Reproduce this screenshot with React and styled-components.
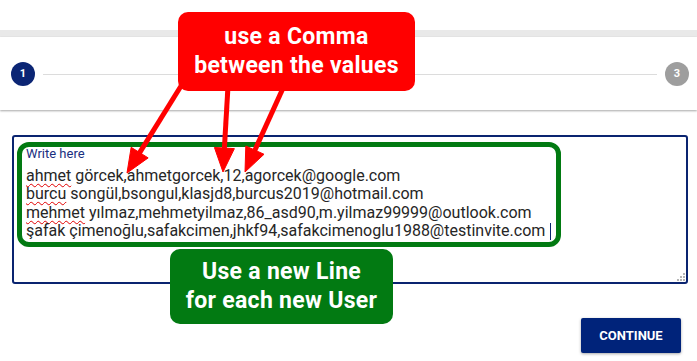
import React from 'react';
import styled, { createGlobalStyle } from 'styled-components';

const GlobalStyle = createGlobalStyle`
  body {
    margin: 0;
    background: #fff;
    font-family: Roboto, "Liberation Sans", sans-serif;
  }
`

const Page = styled.div`
  position: relative;
  width: 697px;
  height: 361px;
  overflow: hidden;
  padding-top: 30px;
  box-sizing: border-box;
`

const Strip = styled.div`
  height: 7px;
  background: #e9e9e9;
`

const Stepper = styled.div`
  display: flex;
  align-items: center;
  gap: 8px;
  height: 73px;
  padding: 0 8px 0 11px;
  background: #fff;
  box-shadow: 0 1px 2px rgba(0, 0, 0, 0.35);
`

const StepDot = styled.div`
  flex: none;
  display: flex;
  align-items: center;
  justify-content: center;
  width: 24px;
  height: 24px;
  border-radius: 50%;
  background: ${p => (p.$active ? '#0b2574' : '#9e9e9e')};
  color: #fff;
  font-size: 11px;
  font-weight: 700;
`

const StepLine = styled.div`
  flex: 1;
  height: 1px;
  margin: 1px 0 0;
  background: #dcdcdc;
`

const Field = styled.div`
  position: relative;
  height: 149px;
  margin: 25px 9px 0 12px;
  padding: 9px 12px 0;
  box-sizing: border-box;
  border: 2px solid #0a2470;
  border-radius: 3px;
`

const Label = styled.div`
  font-size: 13px;
  line-height: 15px;
  color: #1a2f80;
`

const Entries = styled.div`
  margin-top: 6px;
  font-size: 16px;
  line-height: 18.4px;
  color: #262626;
  white-space: pre;
`

const Typo = styled.span`
  text-decoration: underline wavy #e00000;
  text-decoration-thickness: 1px;
  text-underline-offset: 2px;
`

const Caret = styled.span`
  display: inline-block;
  width: 1px;
  height: 17px;
  margin-left: 5px;
  vertical-align: -4px;
  background: #0a2470;
`

const Grip = styled.svg`
  position: absolute;
  right: 1px;
  bottom: 1px;
`

const Footer = styled.div`
  display: flex;
  justify-content: flex-end;
  margin: 34px 16px 0 0;
`

const ContinueButton = styled.button`
  width: 100px;
  height: 35px;
  border: 0;
  border-radius: 2px;
  background: #00237a;
  color: #fff;
  font-family: Roboto, "Liberation Sans", sans-serif;
  font-size: 13px;
  font-weight: 700;
  box-shadow: 0 1px 3px rgba(0, 0, 0, 0.35);
`

const Highlight = styled.div`
  position: absolute;
  left: 17px;
  top: 142px;
  width: 544px;
  height: 105px;
  box-sizing: border-box;
  border: 5px solid #027a12;
  border-radius: 12px;
  pointer-events: none;
`

const Callout = styled.div`
  position: absolute;
  left: ${p => p.$left}px;
  top: ${p => p.$top}px;
  width: ${p => p.$width}px;
  height: ${p => p.$height}px;
  display: flex;
  flex-direction: column;
  align-items: center;
  justify-content: center;
  border-radius: 10px;
  background: ${p => p.$bg};
  color: #fff;
  font-size: 23px;
  font-weight: 700;
  letter-spacing: 0.3px;
  line-height: 28.5px;
  text-align: center;
`

const Arrows = styled.svg`
  position: absolute;
  left: 0;
  top: 0;
  pointer-events: none;
`

const arrows = [
  { from: [181, 86], tip: [127, 173] },
  { from: [228, 86], tip: [223, 172] },
  { from: [284, 86], tip: [245, 172] },
];

const Arrow = ({ from, tip }) => {
  const dx = tip[0] - from[0];
  const dy = tip[1] - from[1];
  const len = Math.hypot(dx, dy);
  const ux = dx / len;
  const uy = dy / len;
  const bx = tip[0] - ux * 24;
  const by = tip[1] - uy * 24;
  const w = 10;
  const pts = `${tip[0]},${tip[1]} ${bx + uy * w},${by - ux * w} ${bx - uy * w},${by + ux * w}`;
  return (
    <g fill="#ff0000" stroke="#ff0000">
      <line x1={from[0]} y1={from[1]} x2={bx + ux * 2} y2={by + uy * 2} strokeWidth="5" />
      <polygon points={pts} strokeWidth="1" strokeLinejoin="round" />
    </g>
  );
};

const App = () => {
  return (
    <Page>
      <GlobalStyle />
      <Strip />
      <Stepper>
        <StepDot $active>1</StepDot>
        <StepLine />
        <StepDot>3</StepDot>
      </Stepper>

      <Field>
        <Label>Write here</Label>
        <Entries>
          <div><Typo>ahmet</Typo> görcek,ahmetgorcek,12,agorcek@google.com</div>
          <div><Typo>burcu</Typo> songül,bsongul,klasjd8,burcus2019@hotmail.com</div>
          <div><Typo>mehmet</Typo> yılmaz,mehmetyilmaz,86_asd90,m.yilmaz99999@outlook.com</div>
          <div>şafak çimenoğlu,safakcimen,jhkf94,safakcimenoglu1988@testinvite.com<Caret /></div>
        </Entries>
        <Grip width="8" height="8" viewBox="0 0 8 8">
          <g fill="#b5b5b5">
            <rect x="6" y="0" width="2" height="2" />
            <rect x="3" y="3" width="2" height="2" />
            <rect x="6" y="3" width="2" height="2" />
            <rect x="0" y="6" width="2" height="2" />
            <rect x="3" y="6" width="2" height="2" />
            <rect x="6" y="6" width="2" height="2" />
          </g>
        </Grip>
      </Field>

      <Footer>
        <ContinueButton>CONTINUE</ContinueButton>
      </Footer>

      <Highlight />
      <Callout $left={178} $top={12} $width={237} $height={79} $bg="#ff0000">
        <div>use a Comma</div>
        <div>between the values</div>
      </Callout>
      <Callout $left={170} $top={249} $width={223} $height={75} $bg="#027a12">
        <div>Use a new Line</div>
        <div>for each new User</div>
      </Callout>
      <Arrows width="697" height="361">
        {arrows.map((a, i) => <Arrow key={i} {...a} />)}
      </Arrows>
    </Page>
  );
};

export default App;
